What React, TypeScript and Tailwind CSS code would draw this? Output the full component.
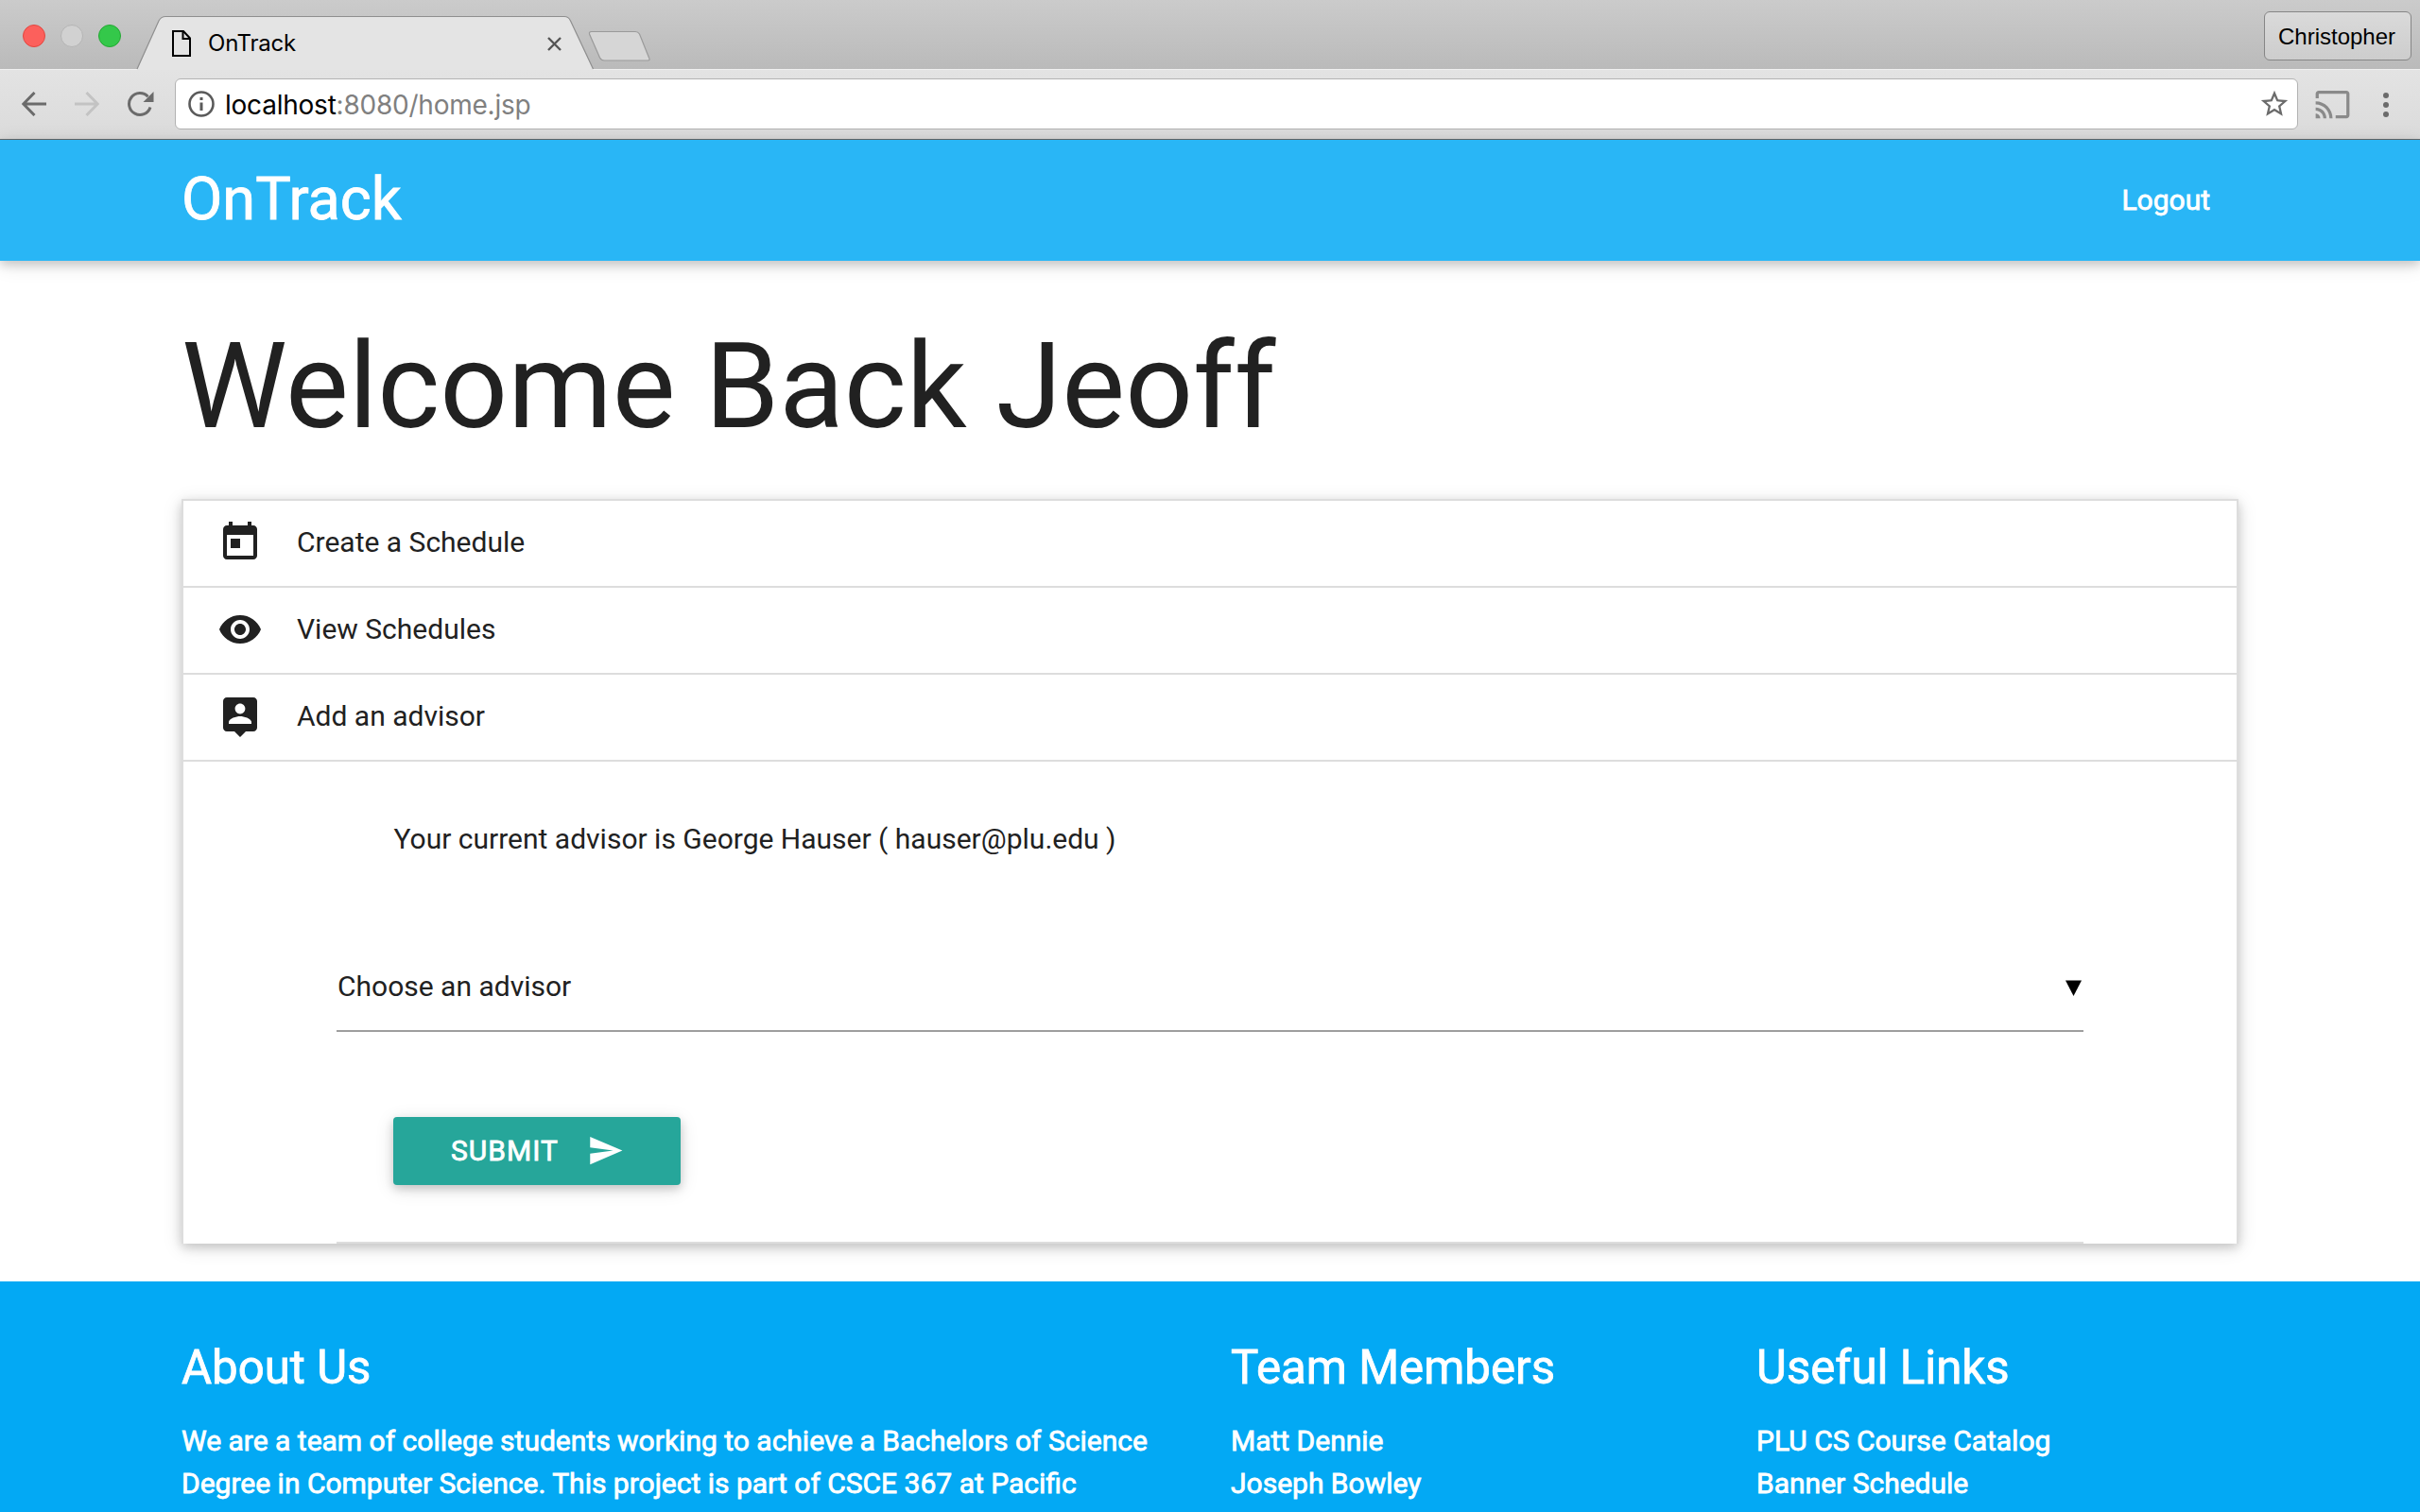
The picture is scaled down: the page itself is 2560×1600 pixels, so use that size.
import React from "react";

type IconProps = { d: string; className: string };

const Icon = ({ d, className }: IconProps) => (
  <svg viewBox="0 0 24 24" className={className} fill="currentColor" aria-hidden="true">
    <path d={d} />
  </svg>
);

const ICONS = {
  today:
    "M19 3h-1V1h-2v2H8V1H6v2H5c-1.11 0-1.99.9-1.99 2L3 19c0 1.1.89 2 2 2h14c1.1 0 2-.9 2-2V5c0-1.1-.9-2-2-2zm0 16H5V8h14v11zM7 10h5v5H7z",
  eye: "M12 4.5C7 4.5 2.73 7.61 1 12c1.73 4.39 6 7.5 11 7.5s9.27-3.11 11-7.5c-1.73-4.39-6-7.5-11-7.5zM12 17c-2.76 0-5-2.24-5-5s2.24-5 5-5 5 2.24 5 5-2.24 5-5 5zm0-8c-1.66 0-3 1.34-3 3s1.34 3 3 3 3-1.34 3-3-1.34-3-3-3z",
  person:
    "M19 2H5c-1.11 0-2 .9-2 2v14c0 1.1.89 2 2 2h4l3 3 3-3h4c1.1 0 2-.9 2-2V4c0-1.1-.9-2-2-2zm-7 3.3c1.49 0 2.7 1.21 2.7 2.7 0 1.49-1.21 2.7-2.7 2.7-1.49 0-2.7-1.21-2.7-2.7 0-1.49 1.21-2.7 2.7-2.7zM18 16H6v-.9c0-2 4-3.1 6-3.1s6 1.1 6 3.1v.9z",
  send: "M2.01 21L23 12 2.01 3 2 10l15 2-15 2z",
  star: "M22 9.24l-7.19-.62L12 2 9.19 8.63 2 9.24l5.46 4.73L5.82 21 12 17.27 18.18 21l-1.63-7.03L22 9.24zM12 15.4l-3.76 2.27 1-4.28-3.32-2.88 4.38-.38L12 6.1l1.71 4.04 4.38.38-3.32 2.88 1 4.28L12 15.4z",
  cast: "M21 3H3c-1.1 0-2 .9-2 2v3h2V5h18v14h-7v2h7c1.1 0 2-.9 2-2V5c0-1.1-.9-2-2-2zM1 18v3h3c0-1.66-1.34-3-3-3zm0-4v2c2.76 0 5 2.24 5 5h2c0-3.87-3.13-7-7-7zm0-4v2c4.97 0 9 4.03 9 9h2c0-6.08-4.93-11-11-11z",
};

const TabStrip = () => (
  <div className="relative flex h-[73px] items-start bg-linear-to-b from-[#cbcbcb] to-[#bababa]">
    <div className="flex gap-4 pt-[26px] pl-6">
      <span className="size-6 rounded-full border border-[#e2463f] bg-[#fc605c]" />
      <span className="size-6 rounded-full border border-[#b5b5b5] bg-[#d1d1d1]" />
      <span className="size-6 rounded-full border border-[#24a833] bg-[#34c84a]" />
    </div>
    <div className="relative z-10 mt-4 ml-[14px] h-[58px] w-[490px]">
      <svg className="absolute inset-0" width="490" height="58" viewBox="0 0 490 58" fill="none" aria-hidden="true">
        <path d="M3 58L26 6Q28.500 1.500 33 1.500H455Q459.500 1.500 461.500 6L485.500 58Z" fill="#e4e4e4" />
        <path d="M3 57L26 6Q28.500 1.500 33 1.500H455Q459.500 1.500 461.500 6L485.500 57" stroke="#8f8f8f" strokeWidth="1.200" />
      </svg>
      <div className="relative flex h-full items-center pl-10">
        <svg width="20" height="28" viewBox="0 0 20 28" fill="none" stroke="#000" strokeWidth="2" className="mt-[2px]" aria-hidden="true">
          <path d="M1 1H12L19 8.500V27H1Z" />
          <path d="M11.500 1V9H19" />
        </svg>
        <span className="mt-px ml-[18px] w-[359px] font-[Inter,sans-serif] text-[24px] tracking-[-0.200px] text-black">OnTrack</span>
        <svg width="15" height="15" viewBox="0 0 15 15" stroke="#555" strokeWidth="2.400" className="mt-[2px]" aria-hidden="true">
          <path d="M1 1L14 14M14 1L1 14" />
        </svg>
      </div>
    </div>
    <svg className="mt-8 -ml-[10px]" width="68" height="36" viewBox="0 0 68 36" aria-hidden="true">
      <path d="M3.500 1.500H50Q53 1.500 54.500 4L64.500 29Q66 32 63.500 32H17.500Q14 32 12.500 29L1.500 4Q1 1.500 3.500 1.500Z" fill="#d6d6d6" stroke="#9a9a9a" strokeWidth="1.200" />
    </svg>
    <button className="mt-3 mr-[9px] ml-auto h-[52px] w-[156px] rounded-[6px] border border-[#868686] bg-linear-to-b from-[#dadada] to-[#cdcdcd] pt-[2px] pr-[2px] font-['Liberation_Sans',sans-serif] text-[24px] text-black">
      Christopher
    </button>
  </div>
);

const Toolbar = () => (
  <div className="flex h-[75px] items-center border-t border-b border-t-[#f0f0f0] border-b-[#6b6b6b] bg-linear-to-b from-[#e3e3e3] to-[#dbdbdb]">
    <svg width="26" height="26" viewBox="0 0 26 26" fill="none" stroke="#6b6b6b" strokeWidth="3" className="-mt-[2px] ml-[23px]" aria-hidden="true">
      <path d="M13.500 1L1.800 13L13.500 25M2 13H26" />
    </svg>
    <svg width="26" height="26" viewBox="0 0 26 26" fill="none" stroke="#c3c3c3" strokeWidth="3" className="-mt-[2px] ml-[30px]" aria-hidden="true">
      <path d="M12.500 1L24.200 13L12.500 25M24 13H0" />
    </svg>
    <svg width="28" height="28" viewBox="0 0 28 28" fill="none" className="-mt-px ml-[30px]" aria-hidden="true">
      <path d="M24 17.500A11.500 11.500 0 1 1 21.500 6.200" stroke="#6b6b6b" strokeWidth="3" />
      <path d="M27.500 1V12H16.500Z" fill="#6b6b6b" />
    </svg>
    <div className="-mt-px ml-[22px] flex h-[54px] w-[2246px] items-center rounded-[6px] border border-[#b2b2b2] bg-white pr-[7px] pl-[13px]">
      <svg width="28" height="28" viewBox="0 0 28 28" fill="none" aria-hidden="true">
        <circle cx="14" cy="14" r="12.500" stroke="#5a5a5a" strokeWidth="2.600" />
        <path d="M14 12.500V21M14 7V10" stroke="#5a5a5a" strokeWidth="3" />
      </svg>
      <span className="mt-px ml-[11px] font-[Inter,sans-serif] text-[28px] tracking-[-0.230px] text-[#808080]">
        <span className="text-black">localhost</span>:8080/home.jsp
      </span>
      <Icon d={ICONS.star} className="ml-auto size-[34px] text-[#6b6b6b]" />
    </div>
    <Icon d={ICONS.cast} className="ml-[17px] size-[39px] text-[#8a8a8a]" />
    <div className="ml-[34px] flex flex-col gap-1">
      <span className="size-[6px] rounded-full bg-[#6b6b6b]" />
      <span className="size-[6px] rounded-full bg-[#6b6b6b]" />
      <span className="size-[6px] rounded-full bg-[#6b6b6b]" />
    </div>
  </div>
);

const MENU = [
  { label: "Create a Schedule", icon: ICONS.today },
  { label: "View Schedules", icon: ICONS.eye },
  { label: "Add an advisor", icon: ICONS.person },
];

const FooterColumn = ({ title, lines, className }: { title: string; lines: string[]; className: string }) => (
  <div className={className}>
    <h5 className="text-[49.200px] leading-[54px]">{title}</h5>
    <div className="mt-[29px] text-[30px] leading-[44.500px] whitespace-nowrap">
      {lines.map((line) => (
        <p key={line}>{line}</p>
      ))}
    </div>
  </div>
);

export default function App() {
  return (
    <div className="flex h-[1600px] w-[2560px] flex-col overflow-hidden bg-white font-[Roboto,sans-serif] text-[30px] text-[#212121]">
      <TabStrip />
      <Toolbar />
      <nav className="z-10 flex h-[128px] shrink-0 items-start justify-between bg-[#29b6f6] px-48 text-white shadow-[0_4px_10px_0_rgba(0,0,0,0.16),0_4px_20px_0_rgba(0,0,0,0.12)] [-webkit-text-stroke:0.800px_white]">
        <a className="text-[63px] leading-[125px]">OnTrack</a>
        <a className="pr-[30px] text-[30px] leading-[127px]">Logout</a>
      </nav>
      <main className="h-[1080px] shrink-0 px-48">
        <h1 className="pt-[64px] text-[126px] leading-[138.600px]">Welcome Back Jeoff</h1>
        <div className="mt-[49.400px] h-[788px] border-x-2 border-t-2 border-[#dddddd] bg-white shadow-[0_4px_10px_0_rgba(0,0,0,0.16),0_4px_20px_0_rgba(0,0,0,0.12)]">
          {MENU.map((item) => (
            <div key={item.label} className="flex h-[92px] border-b-2 border-[#dddddd] pl-9 leading-[87px]">
              <Icon d={item.icon} className="mt-5 mr-9 size-12" />
              {item.label}
            </div>
          ))}
          <div className="mx-auto flex h-[510px] w-[1848px] flex-col items-start border-b-2 border-[#dddddd]">
            <p className="mt-[59px] ml-[60.500px] leading-[45px]">Your current advisor is George Hauser ( hauser@plu.edu )</p>
            <div className="mt-[92px] flex h-[90px] w-full items-start justify-between border-b-2 border-[#9e9e9e] pr-[2px] pl-px leading-[83px]">
              <span>Choose an advisor</span>
              <svg width="17" height="17" viewBox="0 0 17 17" className="mt-[35px]" aria-hidden="true">
                <path d="M0 0.500H17L8.500 17Z" fill="#000" />
              </svg>
            </div>
            <button className="mt-[90px] ml-[60px] flex h-[72px] w-[304px] items-center justify-between rounded-[4px] bg-[#26a69a] px-[60px] text-[30px] tracking-[1px] text-white shadow-[0_4px_10px_0_rgba(0,0,0,0.16),0_4px_20px_0_rgba(0,0,0,0.12)]">
              <span className="pl-px [-webkit-text-stroke:0.800px_white]">SUBMIT</span>
              <Icon d={ICONS.send} className="size-[39px]" />
            </button>
          </div>
        </div>
      </main>
      <footer className="flex h-[244px] shrink-0 bg-[#03a9f4] px-48 pt-[64px] text-white [-webkit-text-stroke:0.800px_white]">
        <FooterColumn
          className="w-[1110px]"
          title="About Us"
          lines={[
            "We are a team of college students working to achieve a Bachelors of Science",
            "Degree in Computer Science. This project is part of CSCE 367 at Pacific",
          ]}
        />
        <FooterColumn className="w-[556px]" title="Team Members" lines={["Matt Dennie", "Joseph Bowley"]} />
        <FooterColumn className="" title="Useful Links" lines={["PLU CS Course Catalog", "Banner Schedule"]} />
      </footer>
    </div>
  );
}
